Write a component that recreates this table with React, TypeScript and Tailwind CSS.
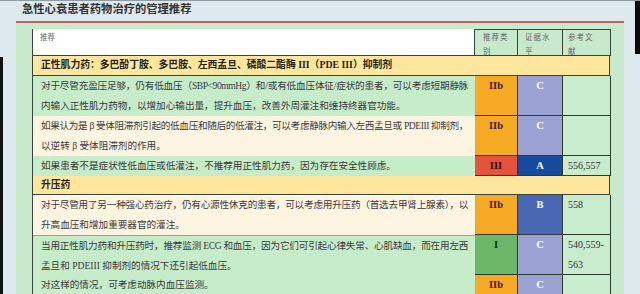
import React from "react";

type Grade = "IIb" | "III" | "I" | "C" | "A" | "B" | "";

type Row =
  | { kind: "section"; text: string; h: string }
  | {
      kind: "rec";
      lines: string[];
      cls: Grade;
      lvl: Grade;
      ref: string[];
      bg: "green" | "cream";
      h: string;
      topLine?: boolean;
    };

const gradeStyle: Record<string, string> = {
  IIb: "bg-[#f6a922] text-[#3d1800]",
  III: "bg-[#e4533c] text-[#3b0b00]",
  I: "bg-[#6cb868] text-[#0f2f10]",
  C: "bg-[#9aa1d3] text-white",
  A: "bg-[#154a9d] text-white",
  B: "bg-[#4867b3] text-white",
  "": "bg-[#c8eccd]",
};

const rows: Row[] = [
  {
    kind: "section",
    text: "正性肌力药：多巴酚丁胺、多巴胺、左西孟旦、磷酸二酯酶 III（PDE III）抑制剂",
    h: "h-[20px]",
  },
  {
    kind: "rec",
    lines: [
      "对于尽管充盈压足够，仍有低血压（SBP<90mmHg）和/或有低血压体征/症状的患者，可以考虑短期静脉",
      "内输入正性肌力药物，以增加心输出量，提升血压，改善外周灌注和维持终器官功能。",
    ],
    cls: "IIb",
    lvl: "C",
    ref: [],
    bg: "green",
    h: "h-[40px]",
  },
  {
    kind: "rec",
    lines: [
      "如果认为是 β 受体阻滞剂引起的低血压和随后的低灌注，可以考虑静脉内输入左西孟旦或 PDEIII 抑制剂，",
      "以逆转 β 受体阻滞剂的作用。",
    ],
    cls: "IIb",
    lvl: "C",
    ref: [],
    bg: "cream",
    h: "h-[40px]",
  },
  {
    kind: "rec",
    lines: ["如果患者不是症状性低血压或低灌注，不推荐用正性肌力药，因为存在安全性顾虑。"],
    cls: "III",
    lvl: "A",
    ref: ["556,557"],
    bg: "green",
    h: "h-[20px]",
  },
  { kind: "section", text: "升压药", h: "h-[19px]" },
  {
    kind: "rec",
    lines: [
      "对于尽管用了另一种强心药治疗，仍有心源性休克的患者，可以考虑用升压药（首选去甲肾上腺素），以",
      "升高血压和增加重要器官的灌注。",
    ],
    cls: "IIb",
    lvl: "B",
    ref: ["558"],
    bg: "cream",
    h: "h-[40px]",
  },
  {
    kind: "rec",
    lines: [
      "当用正性肌力药和升压药时，推荐监测 ECG 和血压，因为它们可引起心律失常、心肌缺血，而在用左西",
      "孟旦和 PDEIII 抑制剂的情况下还引起低血压。",
    ],
    cls: "I",
    lvl: "C",
    ref: ["540,559-", "563"],
    bg: "green",
    h: "h-[40px]",
    topLine: true,
  },
  {
    kind: "rec",
    lines: ["对这样的情况，可考虑动脉内血压监测。"],
    cls: "IIb",
    lvl: "C",
    ref: [],
    bg: "green",
    h: "h-[20px]",
  },
];

const font = "font-['Liberation_Serif','Noto_Sans_CJK_SC',serif]";

const GradeCell = ({ g, w }: { g: Grade; w: string }) => (
  <div
    className={`${w} ${gradeStyle[g]} shrink-0 border-r border-b border-[#2e3a2e] flex justify-center pt-[3px] text-[10.5px] font-bold leading-[14px]`}
  >
    {g}
  </div>
);

export default function App() {
  return (
    <div
      className={`relative w-[640px] h-[294px] overflow-hidden bg-[#dde9ee] border-t border-[#8e9ca2] ${font}`}
    >
      {/* bits of other windows peeking in at the edges */}
      <div className="absolute left-0 top-[56px] w-[3px] h-[240px] bg-[#111]" />
      <div className="absolute right-0 top-0 w-[5px] h-[53px] bg-[#0a0a0a]" />

      <div className="h-[20px] pl-[22px] text-[11.3px] font-bold leading-[15px] text-[#333] font-['Noto_Sans_CJK_SC',sans-serif]">
        急性心衰患者药物治疗的管理推荐
      </div>

      <div className="ml-[16px] w-[608px] h-[280px] border-t-2 border-[#c8625c] bg-[#c8e9cc] pl-[16px] pt-[6px]">
        <div className="w-[578px] border-l border-[#3a443a]">
          {/* header */}
          <div className="flex h-[27px] text-[7.5px] leading-[14px] text-[#666] font-['Noto_Sans_CJK_SC',sans-serif]">
            <div className="w-[442px] shrink-0 bg-white border-b border-r border-[#3a443a] pl-[7px] pt-[1px]">
              推荐
            </div>
            <div className="w-[43px] shrink-0 border-r border-b border-t border-[#3a443a] pl-[8px] tracking-[1px]">
              推荐类
              <br />别
            </div>
            <div className="w-[45px] shrink-0 border-r border-b border-t border-[#3a443a] pl-[7px] tracking-[1px]">
              证据水
              <br />平
            </div>
            <div className="w-[48px] shrink-0 border-r border-b border-t border-[#3a443a] pl-[5px] tracking-[1px]">
              参考文
              <br />献
            </div>
          </div>

          {rows.map((row, i) =>
            row.kind === "section" ? (
              <div
                key={i}
                className={`${row.h} bg-[#fee79d] border-b border-r border-[#3a443a] pl-[8px] text-[9.8px] font-bold leading-[18px] text-[#222] whitespace-nowrap`}
              >
                {row.text}
              </div>
            ) : (
              <div key={i} className={`flex ${row.h}`}>
                <div
                  className={`w-[442px] shrink-0 overflow-hidden pl-[8px] text-[9.6px] leading-[20px] text-[#3a3a3a] ${
                    row.bg === "green" ? "bg-[#c6ecca]" : "bg-[#fdf4e2]"
                  } ${row.topLine ? "border-t border-[#8aa88a]" : ""}`}
                >
                  {row.lines.map((l, j) =>
                    j === 0 && row.lines.length > 1 ? (
                      <div
                        key={j}
                        className="w-[427px] tracking-[-0.45px] [text-align-last:justify] h-[20px] overflow-hidden"
                      >
                        {l}
                      </div>
                    ) : (
                      <div key={j} className="whitespace-nowrap">
                        {l}
                      </div>
                    ),
                  )}
                </div>
                <GradeCell g={row.cls} w="w-[43px]" />
                <GradeCell g={row.lvl} w="w-[45px]" />
                <div className="w-[48px] shrink-0 bg-[#c8eccd] border-r border-b border-[#2e3a2e] pl-[5px] text-[10px] leading-[20px] text-[#333]">
                  {row.ref.map((r, j) => (
                    <div key={j}>{r}</div>
                  ))}
                </div>
              </div>
            ),
          )}
        </div>
      </div>
    </div>
  );
}
